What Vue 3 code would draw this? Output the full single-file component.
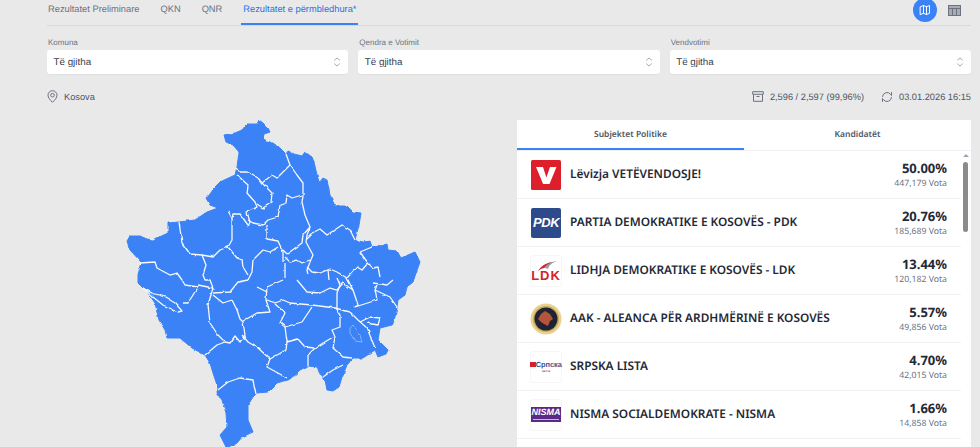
<script setup>
const tabs = [
  { label: 'Rezultatet Preliminare' },
  { label: 'QKN' },
  { label: 'QNR' },
  { label: 'Rezultatet e përmbledhura*', active: true },
]
const filters = ['Komuna', 'Qendra e Votimit', 'Vendvotimi']
const parties = [
  { logo: 'v', name: 'Lëvizja VETËVENDOSJE!', pct: '50.00%', votes: '447,179 Vota' },
  { logo: 'pdk', name: 'PARTIA DEMOKRATIKE E KOSOVËS - PDK', pct: '20.76%', votes: '185,689 Vota' },
  { logo: 'ldk', name: 'LIDHJA DEMOKRATIKE E KOSOVËS - LDK', pct: '13.44%', votes: '120,182 Vota' },
  { logo: 'aak', name: 'AAK - ALEANCA PËR ARDHMËRINË E KOSOVËS', pct: '5.57%', votes: '49,856 Vota' },
  { logo: 'sl', name: 'SRPSKA LISTA', pct: '4.70%', votes: '42,015 Vota' },
  { logo: 'nisma', name: 'NISMA SOCIALDEMOKRATE - NISMA', pct: '1.66%', votes: '14,858 Vota' },
  { logo: 'blank', name: '', pct: '', votes: '' },
]
const outline = '224,135 235,133 242,130 247,124 257,124 259,120 263,123 268,128 270,132 264,134 263,139 270,142 280,148 286,154 288,151 294,154 302,156 305,152 312,157 314,162 317,175 319,183 323,178 327,180 330,195 335,206 347,206 353,212 361,213 359,225 356,236 355,240 363,242 370,241 372,247 380,246 387,244 388,250 397,251 401,258 415,252 420,262 415,276 413,282 407,287 405,295 398,300 397,307 395,317 392,325 380,328 378,340 388,350 386,354 378,357 375,350 363,358 353,358 347,365 342,377 339,387 333,391 327,390 325,380 320,373 317,367 308,366 300,370 290,379 277,383 268,392 257,393 253,397 248,405 248,420 253,432 242,437 237,443 227,449 220,435 227,427 226,413 222,400 217,393 218,388 213,373 210,363 205,355 192,348 180,338 167,338 165,330 159,320 155,303 148,293 138,283 138,275 142,263 130,250 127,241 130,236 140,236 147,239 153,240 168,233 168,223 179,222 195,220 207,212 218,208 210,205 206,198 212,190 220,182 235,175 237,167 239,152 233,145 226,142'
const borders = [
  '236,168 240,172 247,172 253,175 258,178 262,183 272,175 277,178 283,172 290,165 286,154',
  '290,165 297,175 303,183 303,195 302,202 305,215 310,227 307,235 306,242 313,255 310,262 307,270 308,275',
  '237,175 248,185 247,193 255,202 257,207 247,212 250,222 248,227',
  '262,183 272,193 271,203 263,208 257,204',
  '248,220 253,223 263,225 268,220 278,217 280,205 286,203 287,195 292,198 302,195',
  '228,211 232,218 233,214 240,214 248,225',
  '232,218 232,240 228,247 220,250 213,257 202,255 190,254 182,243 179,222',
  '228,247 237,258 242,260 243,267 248,275',
  '267,225 267,239 278,241 283,252 283,262',
  '287,254 302,243 303,235 310,227',
  '283,250 287,254',
  '278,247 270,252 263,250 253,260 252,272 248,280',
  '285,257 290,262 297,260 302,263 310,260',
  '285,263 285,278',
  '307,267 312,272 320,273 330,269 337,272 347,278 357,267 362,270 368,263 360,252 372,247',
  '355,240 350,230 342,225 330,233 327,235 320,229 312,233 307,238',
  '368,263 373,268 378,267 380,277',
  '328,270 329,280',
  '140,263 155,262 157,268 170,275 177,273 182,280 185,285 198,287 188,303 182,303',
  '202,255 206,265 203,275 205,280 210,280 213,288',
  '143,288 152,293 165,297 175,303 182,311 178,312 163,305 153,297 143,288',
  '198,285 213,288 208,305 210,323 218,335 225,342 217,345 205,355',
  '213,295 223,303 232,300 237,310 240,319 243,322 245,335 240,342 235,336 230,343 225,342',
  '213,293 230,292 238,282 248,280',
  '243,321 257,313 270,312 266,300 267,287 283,280',
  '257,287 267,292',
  '267,300 275,303 283,300 290,303 312,305 335,308 340,315',
  '275,304 285,313 280,323 285,327 302,322 312,307',
  '285,327 287,342 298,339 305,347 315,348 333,337',
  '287,342 286,350 270,359 258,348 248,342 242,335',
  '270,359 267,367 287,378',
  '315,348 308,355 308,366',
  '218,390 228,382 240,378 253,380 256,394',
  '340,315 340,327 332,330 335,337 333,348 343,357 352,358',
  '335,308 350,312 358,320 367,328 375,348',
  '360,322 370,317 380,318 378,325 367,323',
  '337,308 337,293 340,285 337,278',
  '353,290 358,305 355,307 377,300 375,290 377,285',
  '375,290 390,297 397,307',
  '323,377 333,370 343,365',
  '297,280 307,292 320,293 330,288 337,290 343,283 353,290 347,278',
  '373,283 387,285 393,280',
]
const lake = '350,328 353,325 360,335 362,342 355,341 350,333'
</script>

<template>
  <div class="page">
    <div class="topbar">
      <nav class="tabs">
        <span v-for="t in tabs" :key="t.label" class="tab" :class="{ active: t.active }">{{ t.label }}</span>
      </nav>
      <div class="views">
        <span class="view-btn on">
          <svg width="12" height="12" viewBox="0 0 24 24" fill="none" stroke="#fff" stroke-width="2" stroke-linejoin="round" stroke-linecap="round">
            <path d="M3 5.5 9 3l6 2.5L21 3v15.5L15 21l-6-2.5L3 21z" />
            <path d="M9 3v15.5M15 5.5V21" />
          </svg>
        </span>
        <span class="view-btn">
          <svg width="13" height="11" viewBox="0 0 13 11">
            <rect x="0.5" y="0.5" width="12" height="10" fill="#a8abb1" stroke="#6b7280" />
            <path d="M0.5 3.5h12M4.5 3.5v7M8.5 3.5v7" stroke="#6b7280" stroke-width="1" fill="none" />
          </svg>
        </span>
      </div>
    </div>

    <div class="filters">
      <label v-for="f in filters" :key="f" class="filter">
        <span class="filter-label">{{ f }}</span>
        <span class="select">
          <span>Të gjitha</span>
          <svg width="8" height="10" viewBox="0 0 8 10" fill="none" stroke="#9ca3af" stroke-width="0.9">
            <path d="M1.2 3.4 4 1l2.8 2.4M1.2 6.6 4 9l2.8-2.4" />
          </svg>
        </span>
      </label>
    </div>

    <div class="info">
      <span class="info-item">
        <svg width="11" height="13" viewBox="0 0 11 13" fill="none" stroke="#6b7280" stroke-width="1">
          <path d="M5.5 12.3C3 9.8 1 7.7 1 5.2a4.5 4.5 0 0 1 9 0c0 2.5-2 4.6-4.5 7.1z" />
          <circle cx="5.5" cy="5.2" r="1.8" />
        </svg>
        Kosova
      </span>
      <span class="stats">
        <span class="info-item">
          <svg width="12" height="11" viewBox="0 0 12 11" fill="none" stroke="#6b7280" stroke-width="1">
            <path d="M0.7 0.7h10.6v2.6H0.7zM1.5 3.3v7h9v-7M4.5 5.5h3" />
          </svg>
          2,596 / 2,597 (99,96%)
        </span>
        <span class="info-item">
          <svg width="12" height="12" viewBox="0 0 24 24" fill="none" stroke="#6b7280" stroke-width="2" stroke-linecap="round" stroke-linejoin="round">
            <path d="M3 11a9 9 0 0 1 16-4.5L21 9V3M21 13a9 9 0 0 1-16 4.5L3 15v6" />
          </svg>
          03.01.2026 16:15
        </span>
      </span>
    </div>

    <div class="main">
      <div class="map">
        <svg width="470" height="327" viewBox="47 120 470 327">
          <defs>
            <filter id="wiggle" x="-5%" y="-5%" width="110%" height="110%" filterUnits="objectBoundingBox">
              <feTurbulence type="fractalNoise" baseFrequency="0.14" numOctaves="2" seed="4" result="n" />
              <feDisplacementMap in="SourceGraphic" in2="n" scale="2.6" xChannelSelector="R" yChannelSelector="G" />
            </filter>
          </defs>
          <g filter="url(#wiggle)">
            <polygon :points="outline" fill="#3b82f6" stroke="#3b82f6" stroke-width="1" stroke-linejoin="round" />
            <polyline v-for="(b, i) in borders" :key="i" :points="b" fill="none" stroke="#f7f9fd" stroke-width="1.3" stroke-linejoin="round" />
            <polygon :points="lake" fill="#3b82f6" stroke="#a9c8f7" stroke-width="0.7" />
          </g>
        </svg>
      </div>

      <section class="panel">
        <div class="panel-tabs">
          <span class="ptab active">Subjektet Politike</span>
          <span class="ptab">Kandidatët</span>
        </div>
        <div class="panel-body">
          <div class="rows">
            <div v-for="p in parties" :key="p.logo" class="row">
              <span class="logo" :class="p.logo">
                <template v-if="p.logo === 'v'">
                  <svg width="30" height="30" viewBox="0 0 30 30">
                    <rect width="30" height="30" rx="1.5" fill="#dc1f2b" />
                    <path d="M5 7h7l3.4 10.5L19 7h6.5l-7 17h-6.4z" fill="#fff" />
                  </svg>
                </template>
                <template v-else-if="p.logo === 'pdk'">PDK</template>
                <template v-else-if="p.logo === 'ldk'">
                  <svg width="30" height="10" viewBox="0 0 30 10">
                    <path d="M7 10C11 4 18 1 26 0 21 2 18 4 17 8 14 6 11 7 7 10z" fill="#9a9ea3" />
                    <path d="M7 10C10 5 15 2 21 1 17 3 14 5 13 7 11 7 9 8 7 10z" fill="#d8222a" />
                  </svg>
                  <span class="ldk-text">LDK</span>
                </template>
                <template v-else-if="p.logo === 'aak'">
                  <svg width="32" height="32" viewBox="0 0 32 32">
                    <circle cx="16" cy="16" r="15.5" fill="#e9d18f" />
                    <circle cx="16" cy="16" r="13" fill="#c9a95a" />
                    <circle cx="16" cy="16" r="11.5" fill="#1e2433" />
                    <path d="M15 8l5 3 3 5-3 2-2 5-4-2-3-2-3-3 3-5z" fill="#b5543a" />
                  </svg>
                </template>
                <template v-else-if="p.logo === 'sl'">
                  <span class="sl-text"><i class="sl-flag"></i>Српска</span>
                  <span class="sl-sub">листа</span>
                </template>
                <template v-else-if="p.logo === 'nisma'">
                  <span class="nisma-bar">NISMA<i></i></span>
                </template>
              </span>
              <span class="name">{{ p.name }}</span>
              <span class="result">
                <b>{{ p.pct }}</b>
                <small>{{ p.votes }}</small>
              </span>
            </div>
          </div>
          <div class="rail">
            <i class="arrow"></i>
            <i class="thumb"></i>
          </div>
        </div>
      </section>
    </div>
  </div>
</template>

<style>
html, body { margin: 0; background: #e9e9e9; overflow: hidden; }
</style>

<style scoped>
.page {
  height: 447px;
  overflow: hidden;
  box-sizing: border-box;
  padding: 0 9px 0 47px;
  background: #e9e9e9;
  font-family: "Liberation Sans", Arial, sans-serif;
  color: #4b5563;
  text-rendering: geometricPrecision;
}
.topbar {
  display: flex;
  justify-content: space-between;
  height: 25px;
  border-bottom: 1px solid #d8d9dc;
}
.tabs { display: flex; gap: 20px; }
.tab {
  height: 25px;
  box-sizing: border-box;
  padding: 3px 0 0 1px;
  font-size: 9.3px;
  line-height: 13px;
  color: #6b7280;
}
.tab.active { color: #2f6fe0; border-bottom: 2px solid #3b82f6; padding: 3px 2px 0; margin-left: -1px; }
.views { display: flex; gap: 5px; margin-top: -2px; margin-right: 5px; }
.view-btn {
  width: 24px;
  height: 24px;
  border-radius: 50%;
  display: flex;
  align-items: center;
  justify-content: center;
}
.view-btn.on { background: #3b82f6; }
.filters {
  display: grid;
  grid-template-columns: repeat(3, 1fr);
  gap: 10px;
  margin-top: 11px;
}
.filter { display: flex; flex-direction: column; }
.filter-label {
  font-size: 8px;
  line-height: 11px;
  color: #6b7280;
  padding-left: 1px;
  margin-bottom: 2px;
}
.select {
  height: 24px;
  background: #fff;
  border-radius: 3px;
  display: flex;
  align-items: center;
  justify-content: space-between;
  padding: 0 7px 0 6.5px;
  font-size: 9.8px;
  color: #374151;
  box-shadow: 0 1px 1px rgba(0, 0, 0, .04);
}
.info {
  display: flex;
  justify-content: space-between;
  align-items: center;
  margin-top: 16px;
  height: 13px;
  font-size: 9.25px;
  color: #4b5563;
}
.info-item { display: inline-flex; align-items: center; gap: 6px; }
.stats { display: inline-flex; gap: 17px; }
.main { display: flex; margin-top: 17px; }
.map { width: 470px; flex: none; height: 327px; }
.map svg { display: block; overflow: hidden; }
.panel { flex: 1; background: #fff; font-family: "Noto Sans", "Open Sans", sans-serif; }
.panel-tabs { display: grid; grid-template-columns: 227px 1fr; height: 30px; border-bottom: 1px solid #eef0f3; }
.ptab {
  display: flex;
  align-items: center;
  justify-content: center;
  height: 29px;
  font-size: 8.5px;
  font-weight: 600;
  color: #4b5563;
}
.ptab.active { border-bottom: 2px solid #3b82f6; height: 30px; box-sizing: border-box; }
.panel-body { display: flex; }
.rows { flex: 1; min-width: 0; }
.row {
  display: flex;
  align-items: center;
  height: 48px;
  box-sizing: border-box;
  padding: 0 14px;
  border-bottom: 1px solid #f1f2f4;
}
.logo {
  width: 30px;
  height: 30px;
  flex: none;
  display: flex;
  flex-direction: column;
  align-items: center;
  justify-content: center;
  border-radius: 2px;
}
.logo svg { display: block; }
.logo.pdk {
  background: #2d4a8a;
  color: #fff;
  font: italic 700 13px "Liberation Sans", sans-serif;
  letter-spacing: -.4px;
}
.logo.ldk, .logo.sl, .logo.nisma, .logo.blank { box-shadow: 0 0 0 1px #f6f6f7; }
.logo.ldk { justify-content: flex-end; padding-bottom: 5px; box-sizing: border-box; }
.ldk-text { font: 700 13px/10px "Liberation Sans", sans-serif; color: #d8222a; letter-spacing: 1px; }
.logo.aak { overflow: visible; }
.logo.aak svg { flex: none; }
.sl-text { display: flex; align-items: center; font: 700 7.4px/9px "Liberation Sans", sans-serif; color: #3b5590; white-space: nowrap; }
.sl-flag { display: block; width: 5.5px; height: 5px; background: #d3232a; flex: none; }
.sl-sub { font: 700 3px/4px "Liberation Sans", sans-serif; color: #d3232a; }
.nisma-bar {
  width: 30px;
  height: 15px;
  background: #5b2a86;
  color: #fff;
  font: italic 700 9px/11px "Liberation Sans", sans-serif;
  text-align: center;
  display: block;
  position: relative;
}
.nisma-bar i { position: absolute; left: 2px; right: 2px; bottom: 2px; height: 1px; background: #c9b3dc; }
.name {
  flex: 1;
  margin-left: 9px;
  margin-bottom: 2px;
  font-size: 11.85px;
  font-weight: 600;
  color: #1f2937;
  white-space: nowrap;
}
.result { display: flex; flex-direction: column; align-items: flex-end; }
.result b { font-size: 13px; line-height: 17px; font-weight: 700; color: #1f2937; }
.result small { font-size: 8.7px; line-height: 13px; color: #6b7280; }
.rail { width: 10px; flex: none; display: flex; flex-direction: column; align-items: center; padding-top: 3px; box-sizing: border-box; padding-right: 1px; }
.arrow { width: 0; height: 0; border-left: 3px solid transparent; border-right: 3px solid transparent; border-bottom: 3px solid #9ca3af; }
.thumb { width: 5.5px; height: 70px; margin-top: 5px; border-radius: 3px; background: #8b8b8b; }
</style>
